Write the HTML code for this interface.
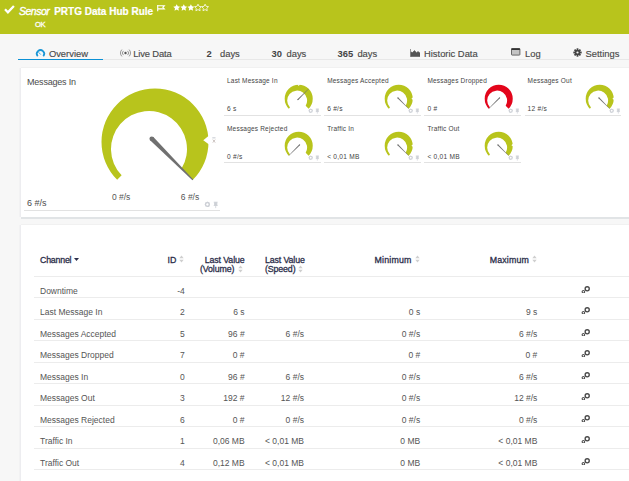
<!DOCTYPE html><html><head><meta charset="utf-8"><style>
html,body{margin:0;padding:0;}
body{width:629px;height:481px;overflow:hidden;position:relative;background:#f7f7f7;font-family:"Liberation Sans", sans-serif;}
.t{position:absolute;white-space:nowrap;}
.hdr{position:absolute;left:0;top:0;width:629px;height:34px;background:#b8c41c;}
.panel{position:absolute;background:#fff;box-shadow:-1.5px 0 0 0 #ededf0, 0 -0.7px 0 0 #eeeeee, 0 2px 0 0 #e1e4e6;}
.ln{position:absolute;height:1px;background:#dedede;}
</style></head><body>
<div class="hdr"></div>
<svg style="position:absolute;left:3.9px;top:4.7px" width="11" height="9" viewBox="0 0 11 9"><path d="M1,4.3 L3.9,7.3 L9.9,1" fill="none" stroke="#fff" stroke-width="2.3"/></svg>
<div class="t" style="left:19px;top:6.31px;font-size:10.5px;line-height:10.5px;color:#fff;font-weight:normal;font-style:italic;letter-spacing:-0.5px;-webkit-text-stroke:0.35px #fff;">Sensor</div>
<div class="t" style="left:54.2px;top:6.63px;font-size:10px;line-height:10px;color:#fff;font-weight:bold;font-style:normal;letter-spacing:0px;-webkit-text-stroke:0.2px #fff;">PRTG Data Hub Rule</div>
<div class="t" style="left:35px;top:20.97px;font-size:7.6px;line-height:7.6px;color:#fff;font-weight:normal;font-style:normal;letter-spacing:-0.35px;-webkit-text-stroke:0.3px #fff;">OK</div>
<svg style="position:absolute;left:156.5px;top:4.5px" width="9" height="7" viewBox="0 0 9 7"><path d="M0.7,0 V6.3 M0.7,0.7 H7.3 L5.9,2.3 L7.3,3.9 H0.7" fill="none" stroke="#fff" stroke-width="1.15"/></svg>
<svg style="position:absolute;left:173px;top:4px" width="38" height="8" viewBox="0 0 38 8"><polygon points="3.70,0.20 4.76,2.34 7.12,2.69 5.41,4.36 5.82,6.71 3.70,5.60 1.58,6.71 1.99,4.36 0.28,2.69 2.64,2.34" fill="#fff"/><polygon points="10.80,0.20 11.86,2.34 14.22,2.69 12.51,4.36 12.92,6.71 10.80,5.60 8.68,6.71 9.09,4.36 7.38,2.69 9.74,2.34" fill="#fff"/><polygon points="17.90,0.20 18.96,2.34 21.32,2.69 19.61,4.36 20.02,6.71 17.90,5.60 15.78,6.71 16.19,4.36 14.48,2.69 16.84,2.34" fill="#fff"/><polygon points="25.00,0.20 26.06,2.34 28.42,2.69 26.71,4.36 27.12,6.71 25.00,5.60 22.88,6.71 23.29,4.36 21.58,2.69 23.94,2.34" fill="none" stroke="#fff" stroke-width="0.8"/><polygon points="32.10,0.20 33.16,2.34 35.52,2.69 33.81,4.36 34.22,6.71 32.10,5.60 29.98,6.71 30.39,4.36 28.68,2.69 31.04,2.34" fill="none" stroke="#fff" stroke-width="0.8"/></svg>
<div class="ln" style="left:18px;top:59px;width:611px;background:#e8e8e8"></div>
<div style="position:absolute;left:18px;top:58.7px;width:85px;height:1.6px;background:#0b90d5"></div>
<svg style="position:absolute;left:34px;top:47px" width="13" height="11" viewBox="34 47 13 11"><path d="M37.7,56.2 A3.65,3.65 0 1 1 43.3,56.2" fill="none" stroke="#1a96d6" stroke-width="1.75"/><path d="M38.8,52.5 L40.5,54.3" stroke="#3aa6dc" stroke-width="0.9" stroke-linecap="round"/></svg>
<div class="t" style="left:48.9px;top:49.44px;font-size:9.4px;line-height:9.4px;color:#4a4a4a;font-weight:normal;font-style:normal;letter-spacing:0px;-webkit-text-stroke:0.15px #4a4a4a;">Overview</div>
<svg style="position:absolute;left:119.5px;top:48.5px" width="11" height="8" viewBox="0 0 11 8"><circle cx="5.5" cy="4" r="1.2" fill="#555"/><path d="M3.4,1.9 A2.9,2.9 0 0 0 3.4,6.1 M7.6,1.9 A2.9,2.9 0 0 1 7.6,6.1 M1.9,0.6 A4.8,4.8 0 0 0 1.9,7.4 M9.1,0.6 A4.8,4.8 0 0 1 9.1,7.4" fill="none" stroke="#8a8a8a" stroke-width="0.9"/></svg>
<div class="t" style="left:133.3px;top:49.44px;font-size:9.4px;line-height:9.4px;color:#4a4a4a;font-weight:normal;font-style:normal;letter-spacing:-0.15px;-webkit-text-stroke:0.15px #4a4a4a;">Live Data</div>
<div class="t" style="left:206.5px;top:49.44px;font-size:9.4px;line-height:9.4px;color:#444;font-weight:bold;font-style:normal;letter-spacing:0px;">2</div>
<div class="t" style="left:220px;top:49.44px;font-size:9.4px;line-height:9.4px;color:#4a4a4a;font-weight:normal;font-style:normal;letter-spacing:0px;-webkit-text-stroke:0.15px #4a4a4a;">days</div>
<div class="t" style="left:271.5px;top:49.44px;font-size:9.4px;line-height:9.4px;color:#444;font-weight:bold;font-style:normal;letter-spacing:0px;">30</div>
<div class="t" style="left:286.5px;top:49.44px;font-size:9.4px;line-height:9.4px;color:#4a4a4a;font-weight:normal;font-style:normal;letter-spacing:0px;-webkit-text-stroke:0.15px #4a4a4a;">days</div>
<div class="t" style="left:337.5px;top:49.44px;font-size:9.4px;line-height:9.4px;color:#444;font-weight:bold;font-style:normal;letter-spacing:0px;">365</div>
<div class="t" style="left:357.4px;top:49.44px;font-size:9.4px;line-height:9.4px;color:#4a4a4a;font-weight:normal;font-style:normal;letter-spacing:0px;-webkit-text-stroke:0.15px #4a4a4a;">days</div>
<svg style="position:absolute;left:410px;top:49px" width="10" height="8" viewBox="0 0 10 8"><path d="M0.5,0 V8 M1,7.5 H10 V4 L8,2.5 L6.5,3.8 L4.5,1.5 L2.5,3.5 L1,3 Z" fill="#555" stroke="#555" stroke-width="0.6"/></svg>
<div class="t" style="left:424px;top:49.44px;font-size:9.4px;line-height:9.4px;color:#4a4a4a;font-weight:normal;font-style:normal;letter-spacing:0px;-webkit-text-stroke:0.15px #4a4a4a;">Historic Data</div>
<svg style="position:absolute;left:511.3px;top:48.4px" width="9.4" height="7.6" viewBox="0 0 9.4 7.6"><rect x="0.5" y="0.5" width="8.4" height="6.6" rx="0.6" fill="#c4c4c4" stroke="#5a5a5a" stroke-width="0.9"/><rect x="0.5" y="0.4" width="8.4" height="1.6" fill="#333"/></svg>
<div class="t" style="left:525px;top:49.44px;font-size:9.4px;line-height:9.4px;color:#4a4a4a;font-weight:normal;font-style:normal;letter-spacing:0px;-webkit-text-stroke:0.15px #4a4a4a;">Log</div>
<svg style="position:absolute;left:573px;top:48px" width="9" height="9" viewBox="-4.5 -4.5 9 9"><circle r="2.8" fill="#444"/><rect x="-0.9" y="-4.2" width="1.8" height="2.2" fill="#444" transform="rotate(0)"/><rect x="-0.9" y="-4.2" width="1.8" height="2.2" fill="#444" transform="rotate(45)"/><rect x="-0.9" y="-4.2" width="1.8" height="2.2" fill="#444" transform="rotate(90)"/><rect x="-0.9" y="-4.2" width="1.8" height="2.2" fill="#444" transform="rotate(135)"/><rect x="-0.9" y="-4.2" width="1.8" height="2.2" fill="#444" transform="rotate(180)"/><rect x="-0.9" y="-4.2" width="1.8" height="2.2" fill="#444" transform="rotate(225)"/><rect x="-0.9" y="-4.2" width="1.8" height="2.2" fill="#444" transform="rotate(270)"/><rect x="-0.9" y="-4.2" width="1.8" height="2.2" fill="#444" transform="rotate(315)"/><circle r="1.1" fill="#f5f5f5"/></svg>
<div class="t" style="left:585.5px;top:49.44px;font-size:9.4px;line-height:9.4px;color:#4a4a4a;font-weight:normal;font-style:normal;letter-spacing:0px;-webkit-text-stroke:0.15px #4a4a4a;">Settings</div>
<div class="panel" style="left:21px;top:68px;width:640px;height:148.7px"></div>
<div class="t" style="left:27px;top:77.58px;font-size:9px;line-height:9px;color:#4b4b4b;font-weight:normal;font-style:normal;letter-spacing:-0.2px;">Messages In</div>
<svg style="position:absolute;left:95.00px;top:82.00px" width="120.00" height="120.00" viewBox="-60 -60 120 120"><path d="M-37.83,37.83 A53.5,53.5 0 1 1 37.83,37.83 L26.57,26.57 A38.0,38.0 0 1 0 -33.37,33.37 Z" fill="#b8c41c"/><path d="M48.27,-1.69 L55.03,-7.24 L55.40,3.39 Z" fill="#fff"/><path d="M-4.88,-1.63 L37.41,38.25 L38.25,37.41 L-1.63,-4.88 Z" fill="#707070"/><circle cx="-3.25" cy="-3.25" r="2.3" fill="#707070"/></svg>
<svg style="position:absolute;left:211px;top:136px" width="6" height="8" viewBox="0 0 6 8"><rect x="1.3" y="1.3" width="3.2" height="1.1" fill="#c9ccd3"/><path d="M1.8,3.6 L4.2,6.6 M4.2,3.6 L1.8,6.6" stroke="#c2b8b4" stroke-width="0.8"/></svg>
<div class="t" style="left:111.9px;top:192.70px;font-size:8.5px;line-height:8.5px;color:#555;font-weight:normal;font-style:normal;letter-spacing:0px;">0 #/s</div>
<div class="t" style="left:180.8px;top:192.70px;font-size:8.5px;line-height:8.5px;color:#555;font-weight:normal;font-style:normal;letter-spacing:0px;">6 #/s</div>
<div class="t" style="left:27px;top:199.38px;font-size:9px;line-height:9px;color:#4b4b4b;font-weight:normal;font-style:normal;letter-spacing:0px;">6 #/s</div>
<div class="ln" style="left:24px;top:210px;width:196px;background:#e2e2e2"></div>
<svg style="position:absolute;left:203.60px;top:200.60px" width="14.00" height="8.00" viewBox="-0.9 -0.9 14 8"><circle cx="2.5" cy="2.5" r="1.9" fill="none" stroke="#cdd0d6" stroke-width="1.3"/><rect x="2.05" y="-0.1" width="0.9" height="1.2" fill="#cdd0d6" transform="rotate(0 2.5 2.5)"/><rect x="2.05" y="-0.1" width="0.9" height="1.2" fill="#cdd0d6" transform="rotate(45 2.5 2.5)"/><rect x="2.05" y="-0.1" width="0.9" height="1.2" fill="#cdd0d6" transform="rotate(90 2.5 2.5)"/><rect x="2.05" y="-0.1" width="0.9" height="1.2" fill="#cdd0d6" transform="rotate(135 2.5 2.5)"/><rect x="2.05" y="-0.1" width="0.9" height="1.2" fill="#cdd0d6" transform="rotate(180 2.5 2.5)"/><rect x="2.05" y="-0.1" width="0.9" height="1.2" fill="#cdd0d6" transform="rotate(225 2.5 2.5)"/><rect x="2.05" y="-0.1" width="0.9" height="1.2" fill="#cdd0d6" transform="rotate(270 2.5 2.5)"/><rect x="2.05" y="-0.1" width="0.9" height="1.2" fill="#cdd0d6" transform="rotate(315 2.5 2.5)"/><path d="M8.8,0.3 h4 M9.6,0.6 h2.4 v2.8 h-2.4 Z M8.8,3.6 h4 M10.8,3.6 v2.6" fill="#cdd0d6" stroke="#cdd0d6" stroke-width="0.8"/></svg>
<div class="t" style="left:227.0px;top:77.80px;font-size:6.5px;line-height:6.5px;color:#444;font-weight:normal;font-style:normal;letter-spacing:0.2px;">Last Message In</div>
<div class="t" style="left:227.0px;top:105.71px;font-size:6.6px;line-height:6.6px;color:#444;font-weight:normal;font-style:normal;letter-spacing:0.25px;">6 s</div>
<div class="ln" style="left:224.0px;top:115.0px;width:96.5px;background:#e2e2e2"></div>
<svg style="position:absolute;left:282.98px;top:82.88px" width="31.44" height="31.44" viewBox="-60 -60 120 120"><path d="M-37.83,37.83 A53.5,53.5 0 1 1 37.83,37.83 L26.57,26.57 A38.0,38.0 0 1 0 -33.37,33.37 Z" fill="#b8c41c"/><path d="M0.00,-48.30 L-5.32,-55.24 L5.32,-55.24 Z" fill="#fff"/><path d="M-1.63,4.88 L38.25,-37.41 L37.41,-38.25 L-4.88,1.63 Z" fill="#707070"/><circle cx="-3.25" cy="3.25" r="2.3" fill="#707070"/></svg>
<svg style="position:absolute;left:308.08px;top:108.18px" width="11.20" height="6.40" viewBox="-0.9 -0.9 14 8"><circle cx="2.5" cy="2.5" r="1.9" fill="none" stroke="#cdd0d6" stroke-width="1.3"/><rect x="2.05" y="-0.1" width="0.9" height="1.2" fill="#cdd0d6" transform="rotate(0 2.5 2.5)"/><rect x="2.05" y="-0.1" width="0.9" height="1.2" fill="#cdd0d6" transform="rotate(45 2.5 2.5)"/><rect x="2.05" y="-0.1" width="0.9" height="1.2" fill="#cdd0d6" transform="rotate(90 2.5 2.5)"/><rect x="2.05" y="-0.1" width="0.9" height="1.2" fill="#cdd0d6" transform="rotate(135 2.5 2.5)"/><rect x="2.05" y="-0.1" width="0.9" height="1.2" fill="#cdd0d6" transform="rotate(180 2.5 2.5)"/><rect x="2.05" y="-0.1" width="0.9" height="1.2" fill="#cdd0d6" transform="rotate(225 2.5 2.5)"/><rect x="2.05" y="-0.1" width="0.9" height="1.2" fill="#cdd0d6" transform="rotate(270 2.5 2.5)"/><rect x="2.05" y="-0.1" width="0.9" height="1.2" fill="#cdd0d6" transform="rotate(315 2.5 2.5)"/><path d="M8.8,0.3 h4 M9.6,0.6 h2.4 v2.8 h-2.4 Z M8.8,3.6 h4 M10.8,3.6 v2.6" fill="#cdd0d6" stroke="#cdd0d6" stroke-width="0.8"/></svg>
<div class="t" style="left:327.2px;top:77.80px;font-size:6.5px;line-height:6.5px;color:#444;font-weight:normal;font-style:normal;letter-spacing:0.2px;">Messages Accepted</div>
<div class="t" style="left:327.2px;top:105.71px;font-size:6.6px;line-height:6.6px;color:#444;font-weight:normal;font-style:normal;letter-spacing:0.25px;">6 #/s</div>
<div class="ln" style="left:324.2px;top:115.0px;width:96.5px;background:#e2e2e2"></div>
<svg style="position:absolute;left:383.18px;top:82.88px" width="31.44" height="31.44" viewBox="-60 -60 120 120"><path d="M-37.83,37.83 A53.5,53.5 0 1 1 37.83,37.83 L26.57,26.57 A38.0,38.0 0 1 0 -33.37,33.37 Z" fill="#b8c41c"/><path d="M48.30,-0.00 L55.24,-5.32 L55.24,5.32 Z" fill="#fff"/><path d="M-4.88,-1.63 L37.41,38.25 L38.25,37.41 L-1.63,-4.88 Z" fill="#707070"/><circle cx="-3.25" cy="-3.25" r="2.3" fill="#707070"/></svg>
<svg style="position:absolute;left:408.28px;top:108.18px" width="11.20" height="6.40" viewBox="-0.9 -0.9 14 8"><circle cx="2.5" cy="2.5" r="1.9" fill="none" stroke="#cdd0d6" stroke-width="1.3"/><rect x="2.05" y="-0.1" width="0.9" height="1.2" fill="#cdd0d6" transform="rotate(0 2.5 2.5)"/><rect x="2.05" y="-0.1" width="0.9" height="1.2" fill="#cdd0d6" transform="rotate(45 2.5 2.5)"/><rect x="2.05" y="-0.1" width="0.9" height="1.2" fill="#cdd0d6" transform="rotate(90 2.5 2.5)"/><rect x="2.05" y="-0.1" width="0.9" height="1.2" fill="#cdd0d6" transform="rotate(135 2.5 2.5)"/><rect x="2.05" y="-0.1" width="0.9" height="1.2" fill="#cdd0d6" transform="rotate(180 2.5 2.5)"/><rect x="2.05" y="-0.1" width="0.9" height="1.2" fill="#cdd0d6" transform="rotate(225 2.5 2.5)"/><rect x="2.05" y="-0.1" width="0.9" height="1.2" fill="#cdd0d6" transform="rotate(270 2.5 2.5)"/><rect x="2.05" y="-0.1" width="0.9" height="1.2" fill="#cdd0d6" transform="rotate(315 2.5 2.5)"/><path d="M8.8,0.3 h4 M9.6,0.6 h2.4 v2.8 h-2.4 Z M8.8,3.6 h4 M10.8,3.6 v2.6" fill="#cdd0d6" stroke="#cdd0d6" stroke-width="0.8"/></svg>
<div class="t" style="left:427.4px;top:77.80px;font-size:6.5px;line-height:6.5px;color:#444;font-weight:normal;font-style:normal;letter-spacing:0.2px;">Messages Dropped</div>
<div class="t" style="left:427.4px;top:105.71px;font-size:6.6px;line-height:6.6px;color:#444;font-weight:normal;font-style:normal;letter-spacing:0.25px;">0 #</div>
<div class="ln" style="left:424.4px;top:115.0px;width:96.5px;background:#e2e2e2"></div>
<svg style="position:absolute;left:483.38px;top:82.88px" width="31.44" height="31.44" viewBox="-60 -60 120 120"><path d="M-37.83,37.83 A53.5,53.5 0 1 1 37.83,37.83 L26.57,26.57 A38.0,38.0 0 1 0 -33.37,33.37 Z" fill="#e3051b"/><path d="M1.63,-4.88 L-38.25,37.41 L-37.41,38.25 L4.88,-1.63 Z" fill="#707070"/><circle cx="3.25" cy="-3.25" r="2.3" fill="#707070"/></svg>
<svg style="position:absolute;left:508.48px;top:108.18px" width="11.20" height="6.40" viewBox="-0.9 -0.9 14 8"><circle cx="2.5" cy="2.5" r="1.9" fill="none" stroke="#cdd0d6" stroke-width="1.3"/><rect x="2.05" y="-0.1" width="0.9" height="1.2" fill="#cdd0d6" transform="rotate(0 2.5 2.5)"/><rect x="2.05" y="-0.1" width="0.9" height="1.2" fill="#cdd0d6" transform="rotate(45 2.5 2.5)"/><rect x="2.05" y="-0.1" width="0.9" height="1.2" fill="#cdd0d6" transform="rotate(90 2.5 2.5)"/><rect x="2.05" y="-0.1" width="0.9" height="1.2" fill="#cdd0d6" transform="rotate(135 2.5 2.5)"/><rect x="2.05" y="-0.1" width="0.9" height="1.2" fill="#cdd0d6" transform="rotate(180 2.5 2.5)"/><rect x="2.05" y="-0.1" width="0.9" height="1.2" fill="#cdd0d6" transform="rotate(225 2.5 2.5)"/><rect x="2.05" y="-0.1" width="0.9" height="1.2" fill="#cdd0d6" transform="rotate(270 2.5 2.5)"/><rect x="2.05" y="-0.1" width="0.9" height="1.2" fill="#cdd0d6" transform="rotate(315 2.5 2.5)"/><path d="M8.8,0.3 h4 M9.6,0.6 h2.4 v2.8 h-2.4 Z M8.8,3.6 h4 M10.8,3.6 v2.6" fill="#cdd0d6" stroke="#cdd0d6" stroke-width="0.8"/></svg>
<div class="t" style="left:527.6px;top:77.80px;font-size:6.5px;line-height:6.5px;color:#444;font-weight:normal;font-style:normal;letter-spacing:0.2px;">Messages Out</div>
<div class="t" style="left:527.6px;top:105.71px;font-size:6.6px;line-height:6.6px;color:#444;font-weight:normal;font-style:normal;letter-spacing:0.25px;">12 #/s</div>
<div class="ln" style="left:524.6px;top:115.0px;width:96.5px;background:#e2e2e2"></div>
<svg style="position:absolute;left:583.58px;top:82.88px" width="31.44" height="31.44" viewBox="-60 -60 120 120"><path d="M-37.83,37.83 A53.5,53.5 0 1 1 37.83,37.83 L26.57,26.57 A38.0,38.0 0 1 0 -33.37,33.37 Z" fill="#b8c41c"/><path d="M48.30,-0.00 L55.24,-5.32 L55.24,5.32 Z" fill="#fff"/><path d="M-4.88,-1.63 L37.41,38.25 L38.25,37.41 L-1.63,-4.88 Z" fill="#707070"/><circle cx="-3.25" cy="-3.25" r="2.3" fill="#707070"/></svg>
<svg style="position:absolute;left:608.68px;top:108.18px" width="11.20" height="6.40" viewBox="-0.9 -0.9 14 8"><circle cx="2.5" cy="2.5" r="1.9" fill="none" stroke="#cdd0d6" stroke-width="1.3"/><rect x="2.05" y="-0.1" width="0.9" height="1.2" fill="#cdd0d6" transform="rotate(0 2.5 2.5)"/><rect x="2.05" y="-0.1" width="0.9" height="1.2" fill="#cdd0d6" transform="rotate(45 2.5 2.5)"/><rect x="2.05" y="-0.1" width="0.9" height="1.2" fill="#cdd0d6" transform="rotate(90 2.5 2.5)"/><rect x="2.05" y="-0.1" width="0.9" height="1.2" fill="#cdd0d6" transform="rotate(135 2.5 2.5)"/><rect x="2.05" y="-0.1" width="0.9" height="1.2" fill="#cdd0d6" transform="rotate(180 2.5 2.5)"/><rect x="2.05" y="-0.1" width="0.9" height="1.2" fill="#cdd0d6" transform="rotate(225 2.5 2.5)"/><rect x="2.05" y="-0.1" width="0.9" height="1.2" fill="#cdd0d6" transform="rotate(270 2.5 2.5)"/><rect x="2.05" y="-0.1" width="0.9" height="1.2" fill="#cdd0d6" transform="rotate(315 2.5 2.5)"/><path d="M8.8,0.3 h4 M9.6,0.6 h2.4 v2.8 h-2.4 Z M8.8,3.6 h4 M10.8,3.6 v2.6" fill="#cdd0d6" stroke="#cdd0d6" stroke-width="0.8"/></svg>
<div class="t" style="left:227.0px;top:125.90px;font-size:6.5px;line-height:6.5px;color:#444;font-weight:normal;font-style:normal;letter-spacing:0.2px;">Messages Rejected</div>
<div class="t" style="left:227.0px;top:153.81px;font-size:6.6px;line-height:6.6px;color:#444;font-weight:normal;font-style:normal;letter-spacing:0.25px;">0 #/s</div>
<div class="ln" style="left:224.0px;top:162.3px;width:96.5px;background:#e2e2e2"></div>
<svg style="position:absolute;left:282.98px;top:130.18px" width="31.44" height="31.44" viewBox="-60 -60 120 120"><path d="M-37.83,37.83 A53.5,53.5 0 1 1 37.83,37.83 L26.57,26.57 A38.0,38.0 0 1 0 -33.37,33.37 Z" fill="#b8c41c"/><path d="M1.63,-4.88 L-38.25,37.41 L-37.41,38.25 L4.88,-1.63 Z" fill="#707070"/><circle cx="3.25" cy="-3.25" r="2.3" fill="#707070"/></svg>
<svg style="position:absolute;left:308.08px;top:155.48px" width="11.20" height="6.40" viewBox="-0.9 -0.9 14 8"><circle cx="2.5" cy="2.5" r="1.9" fill="none" stroke="#cdd0d6" stroke-width="1.3"/><rect x="2.05" y="-0.1" width="0.9" height="1.2" fill="#cdd0d6" transform="rotate(0 2.5 2.5)"/><rect x="2.05" y="-0.1" width="0.9" height="1.2" fill="#cdd0d6" transform="rotate(45 2.5 2.5)"/><rect x="2.05" y="-0.1" width="0.9" height="1.2" fill="#cdd0d6" transform="rotate(90 2.5 2.5)"/><rect x="2.05" y="-0.1" width="0.9" height="1.2" fill="#cdd0d6" transform="rotate(135 2.5 2.5)"/><rect x="2.05" y="-0.1" width="0.9" height="1.2" fill="#cdd0d6" transform="rotate(180 2.5 2.5)"/><rect x="2.05" y="-0.1" width="0.9" height="1.2" fill="#cdd0d6" transform="rotate(225 2.5 2.5)"/><rect x="2.05" y="-0.1" width="0.9" height="1.2" fill="#cdd0d6" transform="rotate(270 2.5 2.5)"/><rect x="2.05" y="-0.1" width="0.9" height="1.2" fill="#cdd0d6" transform="rotate(315 2.5 2.5)"/><path d="M8.8,0.3 h4 M9.6,0.6 h2.4 v2.8 h-2.4 Z M8.8,3.6 h4 M10.8,3.6 v2.6" fill="#cdd0d6" stroke="#cdd0d6" stroke-width="0.8"/></svg>
<div class="t" style="left:327.2px;top:125.90px;font-size:6.5px;line-height:6.5px;color:#444;font-weight:normal;font-style:normal;letter-spacing:0.2px;">Traffic In</div>
<div class="t" style="left:327.2px;top:153.81px;font-size:6.6px;line-height:6.6px;color:#444;font-weight:normal;font-style:normal;letter-spacing:0.25px;">&lt; 0,01 MB</div>
<div class="ln" style="left:324.2px;top:162.3px;width:96.5px;background:#e2e2e2"></div>
<svg style="position:absolute;left:383.18px;top:130.18px" width="31.44" height="31.44" viewBox="-60 -60 120 120"><path d="M-37.83,37.83 A53.5,53.5 0 1 1 37.83,37.83 L26.57,26.57 A38.0,38.0 0 1 0 -33.37,33.37 Z" fill="#b8c41c"/><path d="M48.30,-0.00 L55.24,-5.32 L55.24,5.32 Z" fill="#fff"/><path d="M-4.88,-1.63 L37.41,38.25 L38.25,37.41 L-1.63,-4.88 Z" fill="#707070"/><circle cx="-3.25" cy="-3.25" r="2.3" fill="#707070"/></svg>
<svg style="position:absolute;left:408.28px;top:155.48px" width="11.20" height="6.40" viewBox="-0.9 -0.9 14 8"><circle cx="2.5" cy="2.5" r="1.9" fill="none" stroke="#cdd0d6" stroke-width="1.3"/><rect x="2.05" y="-0.1" width="0.9" height="1.2" fill="#cdd0d6" transform="rotate(0 2.5 2.5)"/><rect x="2.05" y="-0.1" width="0.9" height="1.2" fill="#cdd0d6" transform="rotate(45 2.5 2.5)"/><rect x="2.05" y="-0.1" width="0.9" height="1.2" fill="#cdd0d6" transform="rotate(90 2.5 2.5)"/><rect x="2.05" y="-0.1" width="0.9" height="1.2" fill="#cdd0d6" transform="rotate(135 2.5 2.5)"/><rect x="2.05" y="-0.1" width="0.9" height="1.2" fill="#cdd0d6" transform="rotate(180 2.5 2.5)"/><rect x="2.05" y="-0.1" width="0.9" height="1.2" fill="#cdd0d6" transform="rotate(225 2.5 2.5)"/><rect x="2.05" y="-0.1" width="0.9" height="1.2" fill="#cdd0d6" transform="rotate(270 2.5 2.5)"/><rect x="2.05" y="-0.1" width="0.9" height="1.2" fill="#cdd0d6" transform="rotate(315 2.5 2.5)"/><path d="M8.8,0.3 h4 M9.6,0.6 h2.4 v2.8 h-2.4 Z M8.8,3.6 h4 M10.8,3.6 v2.6" fill="#cdd0d6" stroke="#cdd0d6" stroke-width="0.8"/></svg>
<div class="t" style="left:427.4px;top:125.90px;font-size:6.5px;line-height:6.5px;color:#444;font-weight:normal;font-style:normal;letter-spacing:0.2px;">Traffic Out</div>
<div class="t" style="left:427.4px;top:153.81px;font-size:6.6px;line-height:6.6px;color:#444;font-weight:normal;font-style:normal;letter-spacing:0.25px;">&lt; 0,01 MB</div>
<div class="ln" style="left:424.4px;top:162.3px;width:96.5px;background:#e2e2e2"></div>
<svg style="position:absolute;left:483.38px;top:130.18px" width="31.44" height="31.44" viewBox="-60 -60 120 120"><path d="M-37.83,37.83 A53.5,53.5 0 1 1 37.83,37.83 L26.57,26.57 A38.0,38.0 0 1 0 -33.37,33.37 Z" fill="#b8c41c"/><path d="M48.27,-1.69 L55.03,-7.24 L55.40,3.39 Z" fill="#fff"/><path d="M-4.88,-1.63 L37.41,38.25 L38.25,37.41 L-1.63,-4.88 Z" fill="#707070"/><circle cx="-3.25" cy="-3.25" r="2.3" fill="#707070"/></svg>
<svg style="position:absolute;left:508.48px;top:155.48px" width="11.20" height="6.40" viewBox="-0.9 -0.9 14 8"><circle cx="2.5" cy="2.5" r="1.9" fill="none" stroke="#cdd0d6" stroke-width="1.3"/><rect x="2.05" y="-0.1" width="0.9" height="1.2" fill="#cdd0d6" transform="rotate(0 2.5 2.5)"/><rect x="2.05" y="-0.1" width="0.9" height="1.2" fill="#cdd0d6" transform="rotate(45 2.5 2.5)"/><rect x="2.05" y="-0.1" width="0.9" height="1.2" fill="#cdd0d6" transform="rotate(90 2.5 2.5)"/><rect x="2.05" y="-0.1" width="0.9" height="1.2" fill="#cdd0d6" transform="rotate(135 2.5 2.5)"/><rect x="2.05" y="-0.1" width="0.9" height="1.2" fill="#cdd0d6" transform="rotate(180 2.5 2.5)"/><rect x="2.05" y="-0.1" width="0.9" height="1.2" fill="#cdd0d6" transform="rotate(225 2.5 2.5)"/><rect x="2.05" y="-0.1" width="0.9" height="1.2" fill="#cdd0d6" transform="rotate(270 2.5 2.5)"/><rect x="2.05" y="-0.1" width="0.9" height="1.2" fill="#cdd0d6" transform="rotate(315 2.5 2.5)"/><path d="M8.8,0.3 h4 M9.6,0.6 h2.4 v2.8 h-2.4 Z M8.8,3.6 h4 M10.8,3.6 v2.6" fill="#cdd0d6" stroke="#cdd0d6" stroke-width="0.8"/></svg>
<div class="panel" style="left:21px;top:225.2px;width:640px;height:280px"></div>
<div class="t" style="left:40px;top:255.75px;font-size:8.8px;line-height:8.8px;color:#2b2e4a;font-weight:normal;font-style:normal;letter-spacing:-0.2px;-webkit-text-stroke:0.3px #2b2e4a;">Channel</div>
<svg style="position:absolute;left:74.2px;top:258.3px" width="5" height="3" viewBox="0 0 5 3"><path d="M0,0 H5 L2.5,3 Z" fill="#2b2e4a"/></svg>
<div class="t" style="left:167.6px;top:255.75px;font-size:8.8px;line-height:8.8px;color:#2b2e4a;font-weight:normal;font-style:normal;letter-spacing:0px;-webkit-text-stroke:0.3px #2b2e4a;">ID</div>
<svg style="position:absolute;left:179.2px;top:254.5px" width="5" height="8" viewBox="0 0 5 8"><path d="M0.3,3.3 L2.5,0.6 L4.7,3.3 Z M0.3,4.7 L2.5,7.4 L4.7,4.7 Z" fill="#cfcfcf"/></svg>
<div class="t" style="right:384.4px;top:255.55px;font-size:8.8px;line-height:8.8px;color:#2b2e4a;font-weight:normal;font-style:normal;letter-spacing:-0.1px;-webkit-text-stroke:0.3px #2b2e4a;">Last Value</div>
<div class="t" style="right:394.7px;top:264.55px;font-size:8.8px;line-height:8.8px;color:#2b2e4a;font-weight:normal;font-style:normal;letter-spacing:-0.1px;-webkit-text-stroke:0.3px #2b2e4a;">(Volume)</div>
<svg style="position:absolute;left:238.4px;top:265px" width="5" height="8" viewBox="0 0 5 8"><path d="M0.3,3.3 L2.5,0.6 L4.7,3.3 Z M0.3,4.7 L2.5,7.4 L4.7,4.7 Z" fill="#cfcfcf"/></svg>
<div class="t" style="left:264.9px;top:255.55px;font-size:8.8px;line-height:8.8px;color:#2b2e4a;font-weight:normal;font-style:normal;letter-spacing:-0.1px;-webkit-text-stroke:0.3px #2b2e4a;">Last Value</div>
<div class="t" style="left:264.9px;top:264.55px;font-size:8.8px;line-height:8.8px;color:#2b2e4a;font-weight:normal;font-style:normal;letter-spacing:-0.1px;-webkit-text-stroke:0.3px #2b2e4a;">(Speed)</div>
<svg style="position:absolute;left:298px;top:265px" width="5" height="8" viewBox="0 0 5 8"><path d="M0.3,3.3 L2.5,0.6 L4.7,3.3 Z M0.3,4.7 L2.5,7.4 L4.7,4.7 Z" fill="#cfcfcf"/></svg>
<div class="t" style="left:374.5px;top:255.75px;font-size:8.8px;line-height:8.8px;color:#2b2e4a;font-weight:normal;font-style:normal;letter-spacing:0.2px;-webkit-text-stroke:0.3px #2b2e4a;">Minimum</div>
<svg style="position:absolute;left:414.6px;top:254.5px" width="5" height="8" viewBox="0 0 5 8"><path d="M0.3,3.3 L2.5,0.6 L4.7,3.3 Z M0.3,4.7 L2.5,7.4 L4.7,4.7 Z" fill="#cfcfcf"/></svg>
<div class="t" style="left:489.8px;top:255.75px;font-size:8.8px;line-height:8.8px;color:#2b2e4a;font-weight:normal;font-style:normal;letter-spacing:0.15px;-webkit-text-stroke:0.3px #2b2e4a;">Maximum</div>
<svg style="position:absolute;left:532px;top:254.5px" width="5" height="8" viewBox="0 0 5 8"><path d="M0.3,3.3 L2.5,0.6 L4.7,3.3 Z M0.3,4.7 L2.5,7.4 L4.7,4.7 Z" fill="#cfcfcf"/></svg>
<div class="ln" style="left:33.5px;top:276px;width:600px;background:#ececec"></div>
<div class="t" style="left:40px;top:286.50px;font-size:8.5px;line-height:8.5px;color:#555;font-weight:normal;font-style:normal;letter-spacing:0px;">Downtime</div>
<div class="t" style="right:444.2px;top:286.50px;font-size:8.5px;line-height:8.5px;color:#555;font-weight:normal;font-style:normal;letter-spacing:0px;">-4</div>
<div class="ln" style="left:33.5px;top:297.0px;width:600px;background:#ececec"></div>
<svg style="position:absolute;left:581px;top:285.5px" width="9" height="7" viewBox="0 0 9 7"><circle cx="6.2" cy="2.8" r="2.05" fill="none" stroke="#484848" stroke-width="1.35"/><circle cx="2.4" cy="5.7" r="1.25" fill="none" stroke="#505050" stroke-width="1.1"/></svg>
<div class="t" style="left:40px;top:308.00px;font-size:8.5px;line-height:8.5px;color:#555;font-weight:normal;font-style:normal;letter-spacing:0px;">Last Message In</div>
<div class="t" style="right:444.2px;top:308.00px;font-size:8.5px;line-height:8.5px;color:#555;font-weight:normal;font-style:normal;letter-spacing:0px;">2</div>
<div class="t" style="right:384.4px;top:308.00px;font-size:8.5px;line-height:8.5px;color:#555;font-weight:normal;font-style:normal;letter-spacing:0px;">6 s</div>
<div class="t" style="right:208.8px;top:308.00px;font-size:8.5px;line-height:8.5px;color:#555;font-weight:normal;font-style:normal;letter-spacing:0px;">0 s</div>
<div class="t" style="right:91.70000000000005px;top:308.00px;font-size:8.5px;line-height:8.5px;color:#555;font-weight:normal;font-style:normal;letter-spacing:0px;">9 s</div>
<div class="ln" style="left:33.5px;top:318.5px;width:600px;background:#ececec"></div>
<svg style="position:absolute;left:581px;top:307.0px" width="9" height="7" viewBox="0 0 9 7"><circle cx="6.2" cy="2.8" r="2.05" fill="none" stroke="#484848" stroke-width="1.35"/><circle cx="2.4" cy="5.7" r="1.25" fill="none" stroke="#505050" stroke-width="1.1"/></svg>
<div class="t" style="left:40px;top:329.50px;font-size:8.5px;line-height:8.5px;color:#555;font-weight:normal;font-style:normal;letter-spacing:0px;">Messages Accepted</div>
<div class="t" style="right:444.2px;top:329.50px;font-size:8.5px;line-height:8.5px;color:#555;font-weight:normal;font-style:normal;letter-spacing:0px;">5</div>
<div class="t" style="right:384.4px;top:329.50px;font-size:8.5px;line-height:8.5px;color:#555;font-weight:normal;font-style:normal;letter-spacing:0px;">96 #</div>
<div class="t" style="right:325px;top:329.50px;font-size:8.5px;line-height:8.5px;color:#555;font-weight:normal;font-style:normal;letter-spacing:0px;">6 #/s</div>
<div class="t" style="right:208.8px;top:329.50px;font-size:8.5px;line-height:8.5px;color:#555;font-weight:normal;font-style:normal;letter-spacing:0px;">0 #/s</div>
<div class="t" style="right:91.70000000000005px;top:329.50px;font-size:8.5px;line-height:8.5px;color:#555;font-weight:normal;font-style:normal;letter-spacing:0px;">6 #/s</div>
<div class="ln" style="left:33.5px;top:340.0px;width:600px;background:#ececec"></div>
<svg style="position:absolute;left:581px;top:328.5px" width="9" height="7" viewBox="0 0 9 7"><circle cx="6.2" cy="2.8" r="2.05" fill="none" stroke="#484848" stroke-width="1.35"/><circle cx="2.4" cy="5.7" r="1.25" fill="none" stroke="#505050" stroke-width="1.1"/></svg>
<div class="t" style="left:40px;top:351.00px;font-size:8.5px;line-height:8.5px;color:#555;font-weight:normal;font-style:normal;letter-spacing:0px;">Messages Dropped</div>
<div class="t" style="right:444.2px;top:351.00px;font-size:8.5px;line-height:8.5px;color:#555;font-weight:normal;font-style:normal;letter-spacing:0px;">7</div>
<div class="t" style="right:384.4px;top:351.00px;font-size:8.5px;line-height:8.5px;color:#555;font-weight:normal;font-style:normal;letter-spacing:0px;">0 #</div>
<div class="t" style="right:208.8px;top:351.00px;font-size:8.5px;line-height:8.5px;color:#555;font-weight:normal;font-style:normal;letter-spacing:0px;">0 #</div>
<div class="t" style="right:91.70000000000005px;top:351.00px;font-size:8.5px;line-height:8.5px;color:#555;font-weight:normal;font-style:normal;letter-spacing:0px;">0 #</div>
<div class="ln" style="left:33.5px;top:361.5px;width:600px;background:#ececec"></div>
<svg style="position:absolute;left:581px;top:350.0px" width="9" height="7" viewBox="0 0 9 7"><circle cx="6.2" cy="2.8" r="2.05" fill="none" stroke="#484848" stroke-width="1.35"/><circle cx="2.4" cy="5.7" r="1.25" fill="none" stroke="#505050" stroke-width="1.1"/></svg>
<div class="t" style="left:40px;top:372.50px;font-size:8.5px;line-height:8.5px;color:#555;font-weight:normal;font-style:normal;letter-spacing:0px;">Messages In</div>
<div class="t" style="right:444.2px;top:372.50px;font-size:8.5px;line-height:8.5px;color:#555;font-weight:normal;font-style:normal;letter-spacing:0px;">0</div>
<div class="t" style="right:384.4px;top:372.50px;font-size:8.5px;line-height:8.5px;color:#555;font-weight:normal;font-style:normal;letter-spacing:0px;">96 #</div>
<div class="t" style="right:325px;top:372.50px;font-size:8.5px;line-height:8.5px;color:#555;font-weight:normal;font-style:normal;letter-spacing:0px;">6 #/s</div>
<div class="t" style="right:208.8px;top:372.50px;font-size:8.5px;line-height:8.5px;color:#555;font-weight:normal;font-style:normal;letter-spacing:0px;">0 #/s</div>
<div class="t" style="right:91.70000000000005px;top:372.50px;font-size:8.5px;line-height:8.5px;color:#555;font-weight:normal;font-style:normal;letter-spacing:0px;">6 #/s</div>
<div class="ln" style="left:33.5px;top:383.0px;width:600px;background:#ececec"></div>
<svg style="position:absolute;left:581px;top:371.5px" width="9" height="7" viewBox="0 0 9 7"><circle cx="6.2" cy="2.8" r="2.05" fill="none" stroke="#484848" stroke-width="1.35"/><circle cx="2.4" cy="5.7" r="1.25" fill="none" stroke="#505050" stroke-width="1.1"/></svg>
<div class="t" style="left:40px;top:394.00px;font-size:8.5px;line-height:8.5px;color:#555;font-weight:normal;font-style:normal;letter-spacing:0px;">Messages Out</div>
<div class="t" style="right:444.2px;top:394.00px;font-size:8.5px;line-height:8.5px;color:#555;font-weight:normal;font-style:normal;letter-spacing:0px;">3</div>
<div class="t" style="right:384.4px;top:394.00px;font-size:8.5px;line-height:8.5px;color:#555;font-weight:normal;font-style:normal;letter-spacing:0px;">192 #</div>
<div class="t" style="right:325px;top:394.00px;font-size:8.5px;line-height:8.5px;color:#555;font-weight:normal;font-style:normal;letter-spacing:0px;">12 #/s</div>
<div class="t" style="right:208.8px;top:394.00px;font-size:8.5px;line-height:8.5px;color:#555;font-weight:normal;font-style:normal;letter-spacing:0px;">0 #/s</div>
<div class="t" style="right:91.70000000000005px;top:394.00px;font-size:8.5px;line-height:8.5px;color:#555;font-weight:normal;font-style:normal;letter-spacing:0px;">12 #/s</div>
<div class="ln" style="left:33.5px;top:404.5px;width:600px;background:#ececec"></div>
<svg style="position:absolute;left:581px;top:393.0px" width="9" height="7" viewBox="0 0 9 7"><circle cx="6.2" cy="2.8" r="2.05" fill="none" stroke="#484848" stroke-width="1.35"/><circle cx="2.4" cy="5.7" r="1.25" fill="none" stroke="#505050" stroke-width="1.1"/></svg>
<div class="t" style="left:40px;top:415.50px;font-size:8.5px;line-height:8.5px;color:#555;font-weight:normal;font-style:normal;letter-spacing:0px;">Messages Rejected</div>
<div class="t" style="right:444.2px;top:415.50px;font-size:8.5px;line-height:8.5px;color:#555;font-weight:normal;font-style:normal;letter-spacing:0px;">6</div>
<div class="t" style="right:384.4px;top:415.50px;font-size:8.5px;line-height:8.5px;color:#555;font-weight:normal;font-style:normal;letter-spacing:0px;">0 #</div>
<div class="t" style="right:325px;top:415.50px;font-size:8.5px;line-height:8.5px;color:#555;font-weight:normal;font-style:normal;letter-spacing:0px;">0 #/s</div>
<div class="t" style="right:208.8px;top:415.50px;font-size:8.5px;line-height:8.5px;color:#555;font-weight:normal;font-style:normal;letter-spacing:0px;">0 #/s</div>
<div class="t" style="right:91.70000000000005px;top:415.50px;font-size:8.5px;line-height:8.5px;color:#555;font-weight:normal;font-style:normal;letter-spacing:0px;">0 #/s</div>
<div class="ln" style="left:33.5px;top:426.0px;width:600px;background:#ececec"></div>
<svg style="position:absolute;left:581px;top:414.5px" width="9" height="7" viewBox="0 0 9 7"><circle cx="6.2" cy="2.8" r="2.05" fill="none" stroke="#484848" stroke-width="1.35"/><circle cx="2.4" cy="5.7" r="1.25" fill="none" stroke="#505050" stroke-width="1.1"/></svg>
<div class="t" style="left:40px;top:437.00px;font-size:8.5px;line-height:8.5px;color:#555;font-weight:normal;font-style:normal;letter-spacing:0px;">Traffic In</div>
<div class="t" style="right:444.2px;top:437.00px;font-size:8.5px;line-height:8.5px;color:#555;font-weight:normal;font-style:normal;letter-spacing:0px;">1</div>
<div class="t" style="right:384.4px;top:437.00px;font-size:8.5px;line-height:8.5px;color:#555;font-weight:normal;font-style:normal;letter-spacing:0px;">0,06 MB</div>
<div class="t" style="right:325px;top:437.00px;font-size:8.5px;line-height:8.5px;color:#555;font-weight:normal;font-style:normal;letter-spacing:0px;">&lt; 0,01 MB</div>
<div class="t" style="right:208.8px;top:437.00px;font-size:8.5px;line-height:8.5px;color:#555;font-weight:normal;font-style:normal;letter-spacing:0px;">0 MB</div>
<div class="t" style="right:91.70000000000005px;top:437.00px;font-size:8.5px;line-height:8.5px;color:#555;font-weight:normal;font-style:normal;letter-spacing:0px;">&lt; 0,01 MB</div>
<div class="ln" style="left:33.5px;top:447.5px;width:600px;background:#ececec"></div>
<svg style="position:absolute;left:581px;top:436.0px" width="9" height="7" viewBox="0 0 9 7"><circle cx="6.2" cy="2.8" r="2.05" fill="none" stroke="#484848" stroke-width="1.35"/><circle cx="2.4" cy="5.7" r="1.25" fill="none" stroke="#505050" stroke-width="1.1"/></svg>
<div class="t" style="left:40px;top:458.50px;font-size:8.5px;line-height:8.5px;color:#555;font-weight:normal;font-style:normal;letter-spacing:0px;">Traffic Out</div>
<div class="t" style="right:444.2px;top:458.50px;font-size:8.5px;line-height:8.5px;color:#555;font-weight:normal;font-style:normal;letter-spacing:0px;">4</div>
<div class="t" style="right:384.4px;top:458.50px;font-size:8.5px;line-height:8.5px;color:#555;font-weight:normal;font-style:normal;letter-spacing:0px;">0,12 MB</div>
<div class="t" style="right:325px;top:458.50px;font-size:8.5px;line-height:8.5px;color:#555;font-weight:normal;font-style:normal;letter-spacing:0px;">&lt; 0,01 MB</div>
<div class="t" style="right:208.8px;top:458.50px;font-size:8.5px;line-height:8.5px;color:#555;font-weight:normal;font-style:normal;letter-spacing:0px;">0 MB</div>
<div class="t" style="right:91.70000000000005px;top:458.50px;font-size:8.5px;line-height:8.5px;color:#555;font-weight:normal;font-style:normal;letter-spacing:0px;">&lt; 0,01 MB</div>
<div class="ln" style="left:33.5px;top:469.0px;width:600px;background:#ececec"></div>
<svg style="position:absolute;left:581px;top:457.5px" width="9" height="7" viewBox="0 0 9 7"><circle cx="6.2" cy="2.8" r="2.05" fill="none" stroke="#484848" stroke-width="1.35"/><circle cx="2.4" cy="5.7" r="1.25" fill="none" stroke="#505050" stroke-width="1.1"/></svg>
</body></html>
